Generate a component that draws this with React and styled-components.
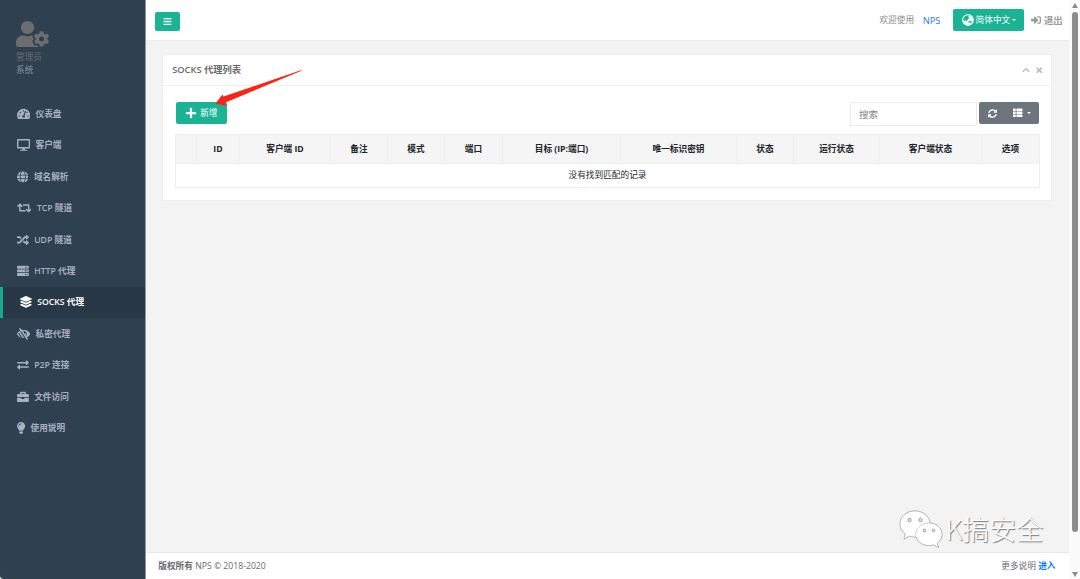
import React, { useState } from "react";
import styled, { createGlobalStyle, css } from "styled-components";
import {
  FaBars,
  FaBriefcase,
  FaChevronUp,
  FaDesktop,
  FaExchangeAlt,
  FaGlobe,
  FaGlobeAsia,
  FaLayerGroup,
  FaLightbulb,
  FaLowVision,
  FaPlus,
  FaRandom,
  FaRetweet,
  FaServer,
  FaSignInAlt,
  FaSyncAlt,
  FaTachometerAlt,
  FaThList,
  FaTimes,
  FaUserCog,
} from "react-icons/fa";

const GlobalStyle = createGlobalStyle`
  * {
    box-sizing: border-box;
  }
  body {
    margin: 0;
    overflow: hidden;
    font-family: "Open Sans", "Noto Sans CJK SC", sans-serif;
    font-size: 8.67px;
    line-height: 13px;
    color: #676a6c;
    background: #d5d9dc;
  }
  svg {
    display: block;
    flex: none;
  }
`;

const Page = styled.div`
  display: flex;
  width: 1080px;
  height: 579px;
`;

/* sidebar */
const Sidebar = styled.nav`
  width: 146px;
  flex: none;
  background: #2f4050;
  border-right: 1px solid #8d98a4;
  border-bottom-left-radius: 4px;
`;

const Profile = styled.div`
  height: 98.6px;
  padding: 21px 0 0 16px;
  color: #6b6d70;

  svg {
    width: 33px;
    height: 26px;
    margin-bottom: 4px;
  }
`;

const Role = styled.div`
  height: 13px;
  color: ${(props) => (props.$sub ? "#8095a8" : "#6b6d70")};
`;

const Menu = styled.ul`
  margin: 0;
  padding: 0;
  list-style: none;
`;

const MenuItem = styled.li`
  display: flex;
  align-items: center;
  gap: 5.5px;
  height: 31.4px;
  padding: 0.6px 0 0 16.8px;
  font-weight: 600;
  color: #a7b1c2;
  cursor: pointer;

  svg {
    width: ${(props) => props.$iconWidth}px;
    height: 11.8px;
    margin-bottom: 1.4px;
  }

  ${(props) =>
    props.$active &&
    css`
      color: #fff;
      background: #293846;
      border-left: 3px solid #19aa8d;
    `}
`;

/* main column */
const Main = styled.div`
  display: flex;
  flex-direction: column;
  width: 923px;
  background: #f3f3f4;
`;

const TopBar = styled.header`
  display: flex;
  align-items: center;
  height: 41px;
  padding: 0 6.5px 0 9.4px;
  background: #fff;
  border-bottom: 1px solid #e9ebed;
`;

const MenuToggle = styled.div`
  padding-top: 2px;
`;

const Button = styled.button`
  display: flex;
  align-items: center;
  justify-content: center;
  gap: ${(props) => props.$gap || 0}px;
  width: ${(props) => props.$w}px;
  height: ${(props) => props.$h}px;
  padding: 0;
  font: inherit;
  color: #fff;
  background: ${(props) => (props.$gray ? "#6c757d" : "#1ab394")};
  border: 0;
  border-radius: 2px;
  white-space: nowrap;
`;

const Caret = styled.i`
  border-top: 2px solid currentColor;
  border-left: 2px solid transparent;
  border-right: 2px solid transparent;
`;

const Welcome = styled.span`
  margin-left: auto;
  color: #888b8d;
`;

const Brand = styled.a`
  margin: 0 13px 0 8.6px;
  font-size: 9.3px;
  color: #1a7bf0;
`;

const Logout = styled.a`
  display: flex;
  align-items: center;
  gap: 3px;
  margin-left: 6.5px;
  font-size: 9.3px;
  font-weight: 600;
  color: #999c9e;
`;

const Panel = styled.section`
  width: 890px;
  height: 147px;
  margin: 13px 0 0 16px;
  background: #fff;
  border: 1px solid #ebedef;
`;

const PanelTitle = styled.div`
  display: flex;
  align-items: center;
  height: 31px;
  padding: 0 7.5px 1px 9.2px;
  font-size: 9.3px;
  font-weight: 600;
  border-bottom: 1px solid #f0f3f3;
`;

const PanelTools = styled.div`
  display: flex;
  gap: 5px;
  margin-left: auto;
  padding-top: 1px;
  color: #b9b9b9;
`;

const PanelBody = styled.div`
  padding: 16px 12px 0;
`;

const Toolbar = styled.div`
  display: flex;
  align-items: flex-start;
  height: 32px;
  padding-left: 0.6px;
`;

const Search = styled.input`
  width: 127px;
  height: 24px;
  margin: 0 2px 0 auto;
  padding: 0 8px;
  font: inherit;
  font-size: 9.6px;
  border: 1px solid #ebeced;
  outline: 0;

  &::placeholder {
    color: #808488;
  }
`;

const ButtonGroup = styled.div`
  display: flex;
  overflow: hidden;
  border-radius: 2px;

  button {
    border-radius: 0;
  }
`;

const Table = styled.table`
  width: 864px;
  table-layout: fixed;
  border-collapse: collapse;
  text-align: center;
  color: #212529;
`;

const Th = styled.th`
  height: 29px;
  padding: 0;
  font-weight: 700;
  background: #f5f5f6;
  border: 1px solid #eeeeee;
`;

const Td = styled.td`
  height: 24px;
  padding: 0 0 1px;
  border: 1px solid #eeeeee;
`;

const Footer = styled.footer`
  display: flex;
  justify-content: space-between;
  align-items: center;
  height: 27px;
  margin-top: auto;
  padding: 0 13.5px 0 12.3px;
  background: #fff;
  border-top: 1px solid #e7eaec;

  a {
    font-weight: 700;
    color: #007bff;
  }
`;

/* scrollbar */
const ScrollTrack = styled.div`
  display: flex;
  flex-direction: column;
  align-items: center;
  width: 11px;
  padding: 3px 0 2px;
  background: #fbfbfb;
`;

const ScrollThumb = styled.div`
  width: 6px;
  height: 520px;
  margin: 4px 0 auto;
  border-radius: 3px;
  background: #8b8b8b;
`;

const ScrollArrow = styled.i`
  border: 3px solid transparent;
  ${(props) =>
    props.$down
      ? "border-top: 5px solid #8b8b8b; border-bottom: 0;"
      : "border-bottom: 5px solid #8b8b8b; border-top: 0;"}
`;

/* overlays */
const Arrow = styled.svg`
  position: absolute;
  left: 210px;
  top: 65px;
`;

const Watermark = styled.div`
  position: absolute;
  left: 898px;
  top: 507px;
  display: flex;
  align-items: center;
  gap: 1.5px;
  font-family: "Noto Sans CJK SC", sans-serif;
  font-size: 27px;
  font-weight: 300;
  line-height: 42px;
  color: #fff;
  text-shadow: 1px 1px 1px #777;
  white-space: nowrap;

  svg {
    filter: drop-shadow(0.6px 0.8px 0.5px #888);
  }
`;

const menus = [
  { icon: FaTachometerAlt, label: "仪表盘", width: 13.2 },
  { icon: FaDesktop, label: "客户端", width: 13.2 },
  { icon: FaGlobe, label: "域名解析", width: 11.6 },
  { icon: FaRetweet, label: "TCP 隧道", width: 14.6 },
  { icon: FaRandom, label: "UDP 隧道", width: 11.9 },
  { icon: FaServer, label: "HTTP 代理", width: 11.9 },
  { icon: FaLayerGroup, label: "SOCKS 代理", width: 11.9 },
  { icon: FaLowVision, label: "私密代理", width: 13.2 },
  { icon: FaExchangeAlt, label: "P2P 连接", width: 11.9 },
  { icon: FaBriefcase, label: "文件访问", width: 11.9 },
  { icon: FaLightbulb, label: "使用说明", width: 8.2 },
];

const columns = [
  ["", 21],
  ["ID", 43],
  ["客户端 ID", 91],
  ["备注", 57],
  ["模式", 57],
  ["端口", 58],
  ["目标 (IP:端口)", 118],
  ["唯一标识密钥", 116],
  ["状态", 57],
  ["运行状态", 86],
  ["客户端状态", 102],
  ["选项", 58],
];

function ChatLogo() {
  return (
    <svg width="46" height="44" viewBox="0 0 46 44">
      <g fill="#fff" stroke="#b4b4b4" strokeWidth="0.6">
        <path d="M17 4C8.500 4 2 9.500 2 17c0 4 2 7.500 5.300 9.800L6 32l5.500-3c2 .6 3.700.9 5.500.9 8.300 0 15-5.800 15-13S25.300 4 17 4Z" />
        <path d="M31 16c-7.500 0-13.300 5-13.300 11.300S23.500 38.500 31 38.500c1.600 0 3.100-.2 4.500-.7l5 2.700-1.300-4.300c2.900-2 4.800-5.200 4.800-8.900C44 21 38.500 16 31 16Z" />
      </g>
      <g fill="#e6e6e6" stroke="#8c8c8c" strokeWidth="0.8">
        <circle cx="11.500" cy="13" r="1.700" />
        <circle cx="22.500" cy="13" r="1.700" />
        <circle cx="26.500" cy="23.500" r="1.400" />
        <circle cx="35.500" cy="23.500" r="1.400" />
      </g>
    </svg>
  );
}

function App() {
  const [active, setActive] = useState(6);
  const [keyword, setKeyword] = useState("");

  return (
    <Page>
      <GlobalStyle />
      <Sidebar>
        <Profile>
          <FaUserCog preserveAspectRatio="none" />
          <Role>管理员</Role>
          <Role $sub>系统</Role>
        </Profile>
        <Menu>
          {menus.map(({ icon: Icon, label, width }, idx) => (
            <MenuItem
              key={label}
              $active={idx === active}
              $iconWidth={width}
              onClick={() => setActive(idx)}
            >
              <Icon />
              {label}
            </MenuItem>
          ))}
        </Menu>
      </Sidebar>

      <Main>
        <TopBar>
          <MenuToggle>
            <Button $w={25} $h={19}>
              <FaBars size={9} />
            </Button>
          </MenuToggle>
          <Welcome>欢迎使用</Welcome>
          <Brand>NPS</Brand>
          <Button $w={71} $h={22} $gap={1.5}>
            <FaGlobeAsia size={12} />
            简体中文
            <Caret />
          </Button>
          <Logout>
            <FaSignInAlt size={10} />
            退出
          </Logout>
        </TopBar>

        <Panel>
          <PanelTitle>
            SOCKS 代理列表
            <PanelTools>
              <FaChevronUp size={8} />
              <FaTimes size={8.5} />
            </PanelTools>
          </PanelTitle>
          <PanelBody>
            <Toolbar>
              <Button $w={51} $h={22} $gap={3.5}>
                <FaPlus size={12} />
                新增
              </Button>
              <Search
                placeholder="搜索"
                value={keyword}
                onChange={(e) => setKeyword(e.target.value)}
              />
              <ButtonGroup>
                <Button $gray $w={26} $h={22}>
                  <FaSyncAlt size={9} />
                </Button>
                <Button $gray $w={34} $h={22} $gap={4}>
                  <FaThList size={9.5} />
                  <Caret />
                </Button>
              </ButtonGroup>
            </Toolbar>
            <Table>
              <colgroup>
                {columns.map(([name, width]) => (
                  <col key={name} width={width} />
                ))}
              </colgroup>
              <thead>
                <tr>
                  {columns.map(([name]) => (
                    <Th key={name}>{name}</Th>
                  ))}
                </tr>
              </thead>
              <tbody>
                <tr>
                  <Td colSpan={columns.length}>没有找到匹配的记录</Td>
                </tr>
              </tbody>
            </Table>
          </PanelBody>
        </Panel>

        <Footer>
          <span>
            <b>版权所有</b> NPS © 2018-2020
          </span>
          <span>
            更多说明 <a>进入</a>
          </span>
        </Footer>
      </Main>

      <ScrollTrack>
        <ScrollArrow />
        <ScrollThumb />
        <ScrollArrow $down />
      </ScrollTrack>

      <Arrow width="95" height="42" viewBox="0 0 95 42">
        <path
          d="M91.500 5 13.500 31.500 12.500 29.500 5.500 38.500 15.500 40.800 15.500 37.500 91.500 5.800Z"
          fill="#fb2314"
        />
      </Arrow>

      <Watermark>
        <ChatLogo />
        K搞安全
      </Watermark>
    </Page>
  );
}

export default App;
